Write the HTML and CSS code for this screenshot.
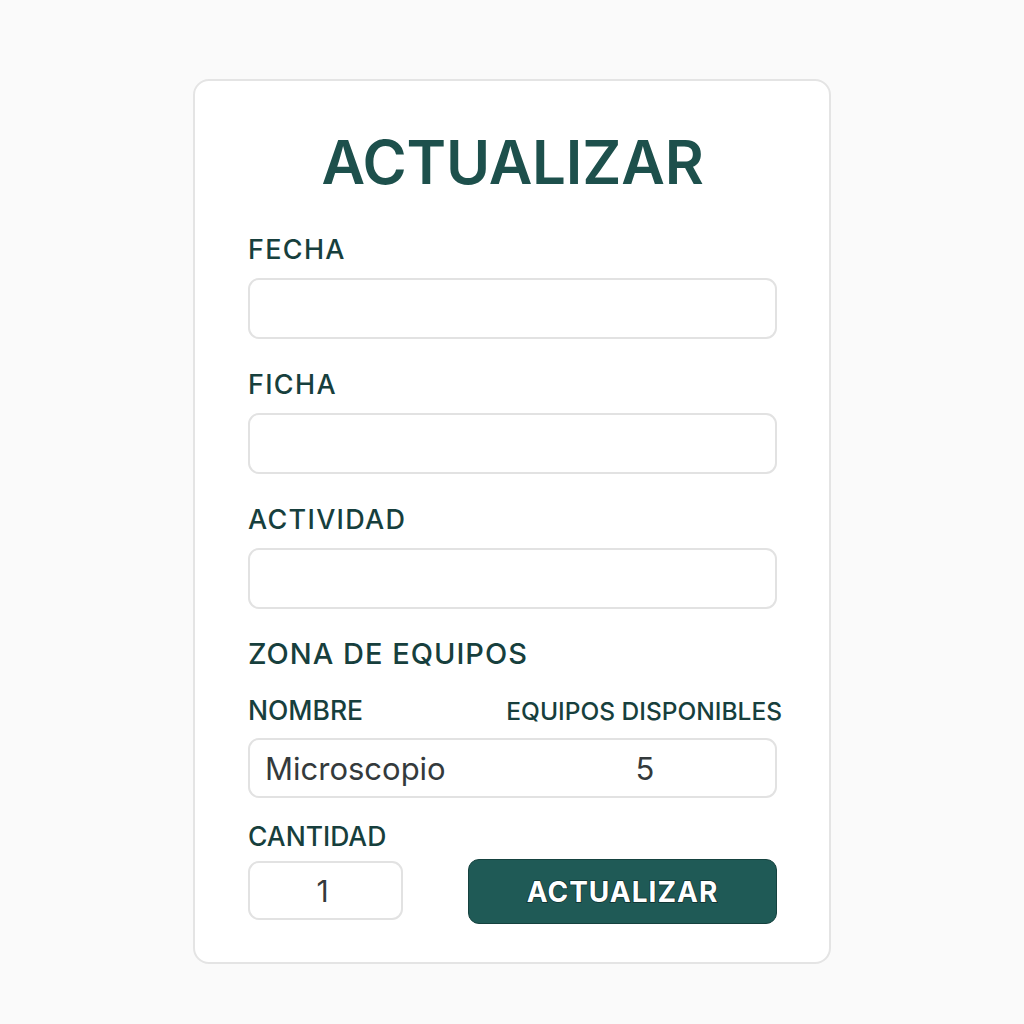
FILE: index.html
```html
<!DOCTYPE html>
<html lang="es">
<head>
<meta charset="utf-8">
<title>Actualizar</title>
<link rel="stylesheet" href="styles.css">
</head>
<body>
<main class="card">
  <h1 class="title">ACTUALIZAR</h1>
  <div class="field">
    <label class="label">FECHA</label>
    <div class="input"></div>
  </div>
  <div class="field">
    <label class="label">FICHA</label>
    <div class="input"></div>
  </div>
  <div class="field">
    <label class="label">ACTIVIDAD</label>
    <div class="input"></div>
  </div>
  <div class="section">ZONA DE EQUIPOS</div>
  <div class="cols">
    <span class="col-name">NOMBRE</span>
    <span class="col-avail">EQUIPOS DISPONIBLES</span>
  </div>
  <div class="row">
    <span class="row-name">Microscopio</span>
    <span class="row-num">5</span>
  </div>
  <div class="qty-label">CANTIDAD</div>
  <div class="bottom">
    <div class="qty">1</div>
    <button class="btn">ACTUALIZAR</button>
  </div>
</main>
</body>
</html>
```
FILE: styles.css
```css
* { box-sizing: border-box; }
body {
  margin: 0;
  background: #fafafa;
  font-family: Inter, "Noto Sans", sans-serif;
  color: #173f3d;
}
.card {
  width: 638px;
  height: 885px;
  margin: 79px auto 0;
  background: #fff;
  border: 2px solid #e4e4e4;
  border-radius: 16px;
  padding: 46px 52px 0 53px;
}
.title {
  margin: 0 0 37px;
  text-align: center;
  font-size: 60px;
  line-height: 70px;
  font-weight: 600;
  letter-spacing: -0.2px;
  color: #1d504c;
}
.field + .field { margin-top: 30px; }
.label {
  display: block;
  font-size: 27px;
  line-height: 32px;
  font-weight: 500;
  letter-spacing: 1.3px;
  margin-bottom: 12px;
}
.input {
  height: 61px;
  border: 2px solid #e2e2e2;
  border-radius: 11px;
  background: #fff;
}
.section {
  margin-top: 28px;
  font-size: 29px;
  line-height: 34px;
  font-weight: 500;
  letter-spacing: 1px;
}
.cols {
  display: flex;
  justify-content: space-between;
  align-items: baseline;
  margin-top: 23px;
  margin-right: -5px;
  font-weight: 500;
  line-height: 32px;
}
.col-name { font-size: 26.5px; }
.col-avail { font-size: 24.5px; }
.row {
  display: grid;
  grid-template-columns: 1fr 260px;
  align-items: center;
  height: 60px;
  margin-top: 11px;
  border: 2px solid #e2e2e2;
  border-radius: 11px;
  padding-left: 15px;
  font-size: 31px;
  color: #343a3c;
}
.row-num { text-align: center; }
.qty-label {
  margin-top: 22px;
  margin-bottom: 9px;
  font-size: 26.5px;
  line-height: 32px;
  font-weight: 500;
}
.bottom {
  display: flex;
  align-items: flex-start;
  gap: 65px;
}
.qty {
  width: 155px;
  height: 59px;
  border: 2px solid #e2e2e2;
  border-radius: 11px;
  display: flex;
  align-items: center;
  justify-content: center;
  padding-right: 6px;
  font-size: 30px;
  color: #343a3c;
}
.btn {
  flex: 1;
  height: 65px;
  margin-top: -2px;
  background: #1f5a56;
  border: 1px solid #15423f;
  border-radius: 11px;
  color: #fff;
  font-family: Inter, "Noto Sans", sans-serif;
  font-size: 28px;
  font-weight: 700;
  letter-spacing: 1px;
  -webkit-text-stroke: 1.5px #0f302e;
  paint-order: stroke fill;
  padding: 0;
}
```
